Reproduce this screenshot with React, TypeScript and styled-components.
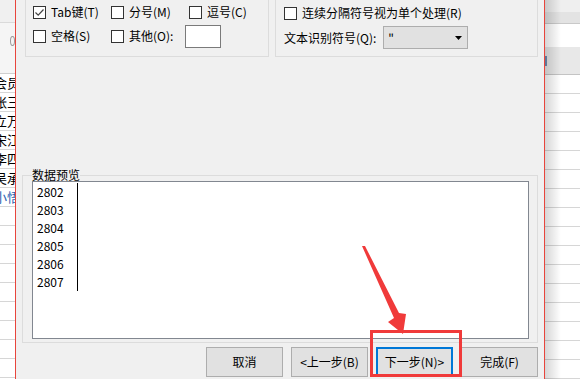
import React from 'react';
import styled, { createGlobalStyle } from 'styled-components';

const Global = createGlobalStyle`
  html, body { margin: 0; padding: 0; }
  body {
    width: 580px; height: 379px; overflow: hidden; background: #fff;
    font-family: "Noto Sans CJK SC", "Noto Sans", sans-serif;
    font-size: 12px; color: #000;
  }
`;

const Screen = styled.div`
  position: relative;
  display: flex;
  width: 580px;
  height: 379px;
  overflow: hidden;
`;

/* ---------- background spreadsheet ---------- */
const LeftSheet = styled.div`
  width: 15px;
  flex: none;
  display: flex;
  flex-direction: column;
  overflow: hidden;
  background: #fff;
`;

const RightSheet = styled.div`
  position: relative;
  flex: 1;
  display: flex;
  flex-direction: column;
  overflow: hidden;
  background: #fff;
  &::after {
    content: "";
    position: absolute;
    left: 0; top: 0; bottom: 0;
    width: 16px;
    background: linear-gradient(to right, rgba(0,0,0,0.16), rgba(0,0,0,0));
  }
`;

const Band = styled.div<{ $h: number; $bg: string; $line?: string }>`
  flex: none;
  box-sizing: border-box;
  height: ${p => p.$h}px;
  background: ${p => p.$bg};
  border-bottom: ${p => (p.$line ? `1px solid ${p.$line}` : 'none')};
  display: flex;
  align-items: center;
`;

const SheetRow = styled.div<{ $blue?: boolean }>`
  flex: none;
  box-sizing: border-box;
  height: 19px;
  border-bottom: 1px solid #d6d6d6;
  font-size: 13px;
  line-height: 18px;
  white-space: nowrap;
  overflow: hidden;
  color: ${p => (p.$blue ? '#2a62b0' : '#000')};
`;

const SheetText = styled.span`
  display: inline-block;
  margin-left: -6px;
`;

const HeaderMark = styled.span`
  width: 2px;
  height: 10px;
  background: #6f8db3;
`;

const ToolGlyph = styled.span`
  width: 8px;
  height: 8px;
  margin: -14px 0 0 10px;
  border: 1px solid #9a9a9a;
  border-radius: 50%;
`;

/* ---------- dialog ---------- */
const Dialog = styled.div`
  width: 530px;
  flex: none;
  box-sizing: border-box;
  border-left: 1px solid #e8453c;
  border-right: 1px solid #e8453c;
  background: #f0f0f0;
  display: flex;
  flex-direction: column;
  padding-bottom: 2px;
  line-height: 16px;
`;

const TopRow = styled.div`
  display: flex;
  gap: 6px;
  height: 57px;
  padding: 0 6px 0 9px;
`;

const Group = styled.div<{ $w?: number }>`
  box-sizing: border-box;
  ${p => (p.$w ? `width: ${p.$w}px; flex: none;` : 'flex: 1;')}
  height: 57px;
  border: 1px solid #dcdcdc;
  border-top: none;
`;

const OptionGrid = styled.div`
  display: grid;
  grid-template-columns: 78px 78px auto;
  grid-auto-rows: 24px;
  padding-left: 7px;
`;

const OptionCell = styled.div<{ $span?: number }>`
  display: flex;
  align-items: center;
  ${p => (p.$span ? `grid-column: span ${p.$span};` : '')}
`;

const CheckItem = styled.label`
  display: flex;
  align-items: center;
  gap: 5px;
  white-space: nowrap;
`;

const Box = styled.span`
  box-sizing: border-box;
  width: 13px;
  height: 13px;
  flex: none;
  border: 1px solid #333;
  background: #fff;
  display: flex;
`;

const TextInput = styled.span`
  box-sizing: border-box;
  width: 36px;
  height: 23px;
  margin-left: 12px;
  background: #fff;
  border: 1px solid #7a7a7a;
`;

const RightStack = styled.div`
  display: flex;
  flex-direction: column;
  padding-left: 8px;
`;

const RightLine = styled.div<{ $h: number }>`
  height: ${p => p.$h}px;
  display: flex;
  align-items: center;
  gap: 7px;
  white-space: nowrap;
`;

const Select = styled.div`
  box-sizing: border-box;
  width: 85px;
  height: 23px;
  background: #e1e1e1;
  border: 1px solid #adadad;
  display: flex;
  align-items: center;
  justify-content: space-between;
  padding: 0 5px 0 4px;
`;

const Preview = styled.fieldset`
  margin: auto 6px 0 6px;
  padding: 0 8px 3px 9px;
  border: 1px solid #dcdcdc;
  min-width: 0;
`;

const Legend = styled.legend`
  padding: 0;
  line-height: 12px;
  margin-left: 0;
`;

const PreviewBox = styled.div`
  box-sizing: border-box;
  height: 158px;
  background: #fff;
  border: 1px solid #828790;
  padding: 1px 0 0 0;
`;

const DataColumn = styled.div`
  width: 40px;
  padding-left: 4px;
  border-right: 1px solid #000;
`;

const DataRow = styled.div`
  height: 18px;
  line-height: 18px;
`;

const ButtonRow = styled.div`
  display: flex;
  justify-content: flex-end;
  gap: 8px;
  padding: 4px 6px 0 0;
`;

const Button = styled.div<{ $focus?: boolean }>`
  box-sizing: border-box;
  width: 77px;
  height: 30px;
  background: #e1e1e1;
  border: ${p => (p.$focus ? '2px solid #0078d7' : '1px solid #adadad')};
  display: flex;
  align-items: center;
  justify-content: center;
  white-space: nowrap;
`;

const Annotations = styled.svg`
  position: absolute;
  left: 0;
  top: 0;
  width: 580px;
  height: 379px;
  pointer-events: none;
`;

function Check({ label, checked }: { label: string; checked?: boolean }) {
  return (
    <CheckItem>
      <Box>
        {checked && (
          <svg width="11" height="11" viewBox="0 0 11 11">
            <path d="M1.5 5.5 L4.2 8.2 L9.5 2.5" fill="none" stroke="#444" strokeWidth="1.2" />
          </svg>
        )}
      </Box>
      <span>{label}</span>
    </CheckItem>
  );
}

const leftNames: { t: string; blue?: boolean }[] = [
  { t: '会员' }, { t: '张三' }, { t: '立万' }, { t: '宋江' }, { t: '李四' }, { t: '吴承' }, { t: '小悟', blue: true },
];

const data = ['2802', '2803', '2804', '2805', '2806', '2807'];

export default function App() {
  const leftRows = Array.from({ length: 16 }, (_, i) => leftNames[i]);
  return (
    <>
      <Global />
      <Screen>
        <LeftSheet>
          <Band $h={23} $bg="#f0f0f0" $line="#dadada" />
          <Band $h={51} $bg="#f5f5f5" $line="#cfcfcf">
            <ToolGlyph />
          </Band>
          {leftRows.map((r, i) => (
            <SheetRow key={i} $blue={r?.blue}>
              {r && <SheetText>{r.t}</SheetText>}
            </SheetRow>
          ))}
        </LeftSheet>

        <Dialog>
          <TopRow>
            <Group $w={244}>
              <OptionGrid>
                <OptionCell><Check label="Tab键(T)" checked /></OptionCell>
                <OptionCell><Check label="分号(M)" /></OptionCell>
                <OptionCell><Check label="逗号(C)" /></OptionCell>
                <OptionCell><Check label="空格(S)" /></OptionCell>
                <OptionCell $span={2}>
                  <Check label="其他(O):" />
                  <TextInput />
                </OptionCell>
              </OptionGrid>
            </Group>
            <Group>
              <RightStack>
                <RightLine $h={26}>
                  <Check label="连续分隔符号视为单个处理(R)" />
                </RightLine>
                <RightLine $h={23}>
                  <span>文本识别符号(Q):</span>
                  <Select>
                    <span>"</span>
                    <svg width="7" height="4" viewBox="0 0 7 4">
                      <path d="M0 0 H7 L3.5 4 Z" fill="#000" />
                    </svg>
                  </Select>
                </RightLine>
              </RightStack>
            </Group>
          </TopRow>

          <Preview>
            <Legend>数据预览</Legend>
            <PreviewBox>
              <DataColumn>
                {data.map(d => (
                  <DataRow key={d}>{d}</DataRow>
                ))}
              </DataColumn>
            </PreviewBox>
          </Preview>

          <ButtonRow>
            <Button>取消</Button>
            <Button>&lt;上一步(B)</Button>
            <Button $focus>下一步(N)&gt;</Button>
            <Button>完成(F)</Button>
          </ButtonRow>
        </Dialog>

        <RightSheet>
          <Band $h={12} $bg="#efefef" />
          <Band $h={12} $bg="#e3e3e3" $line="#c9c9c9" />
          <Band $h={23} $bg="#ffffff" />
          <Band $h={28} $bg="#e8e8e8" $line="#c4c4c4">
            <HeaderMark />
          </Band>
          {Array.from({ length: 16 }, (_, i) => (
            <SheetRow key={i} />
          ))}
        </RightSheet>

        <Annotations viewBox="0 0 580 379">
          <polygon
            points="362,246 365,246 399,313 406,314 403,334 388,322 394,318"
            fill="#f03a3a"
          />
          <rect x="371.5" y="331.5" width="89" height="44" fill="none" stroke="#f03a3a" strokeWidth="3" />
        </Annotations>
      </Screen>
    </>
  );
}
